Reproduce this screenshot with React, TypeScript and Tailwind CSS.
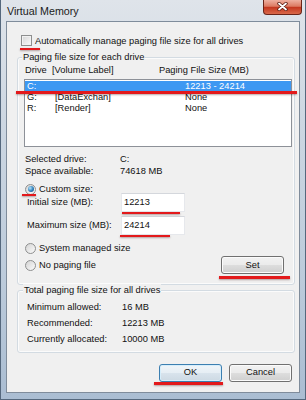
import React from "react";

function Checkbox() {
  return (
    <div className="w-[11px] h-[11px] shrink-0 border border-[#8e8f8f] bg-gradient-to-br from-[#d6d6d6] to-[#fbfbfb] shadow-[inset_0_0_0_1px_#f2f2f2]" />
  );
}

function Radio({ checked = false }: { checked?: boolean }) {
  return (
    <div className="w-[11px] h-[11px] shrink-0 rounded-full border border-[#8e8f8f] bg-gradient-to-br from-[#d4d4d4] to-[#fbfbfb] flex items-center justify-center">
      {checked && (
        <div className="w-[6px] h-[6px] rounded-full bg-[radial-gradient(circle_at_35%_35%,#b5e4fb,#2f7fbb_55%,#164a76)]" />
      )}
    </div>
  );
}

function Button({ label, primary = false }: { label: string; primary?: boolean }) {
  return (
    <div
      className={
        primary
          ? "w-[63px] h-[18px] rounded-[3px] border border-[#3c7fb1] shadow-[inset_0_0_0_1px_#d6eefb] bg-[linear-gradient(#f0f5f9,#e6eef4_48%,#d8e3ec_52%,#cdd9e3)] flex items-center justify-center"
          : "w-[63px] h-[18px] rounded-[3px] border border-[#707070] shadow-[inset_0_0_0_1px_#fbfbfb] bg-[linear-gradient(#f2f2f2,#ebebeb_48%,#dddddd_52%,#cfcfcf)] flex items-center justify-center"
      }
    >
      {label}
    </div>
  );
}

function Field({ label, value }: { label: string; value: string }) {
  return (
    <div className="flex items-center h-[19px] pl-[9px]">
      <span className="w-[94px]">{label}</span>
      <div className="w-[64px] h-[19px] bg-white border border-[#e6e8ec] border-t-[#d4d7dc] pl-[2px] flex items-center leading-[12px] pb-[1px]">
        {value}
      </div>
    </div>
  );
}

const drives = [
  { letter: "C:", label: "", size: "12213 - 24214", selected: true },
  { letter: "G:", label: "[DataExchan]", size: "None", selected: false },
  { letter: "R:", label: "[Render]", size: "None", selected: false },
];

export default function App() {
  return (
    <div className="relative w-[306px] h-[400px] overflow-hidden font-['Liberation_Sans',Arial,sans-serif] text-[9.3px] text-[#111]">
      <div className="flex flex-col w-full h-full border-x border-b border-[#55687d] bg-[linear-gradient(#dfe4ea,#cdd7e2_30%,#bccbdb_70%,#aabdd2)]">
        {/* title bar */}
        <div className="flex justify-between h-[21px] shrink-0">
          <span className="ml-[6px] mt-[5px] text-[10.7px] leading-[13px] text-[#1b1b1b]">Virtual Memory</span>
          <div className="mr-[3px] w-[39px] h-[15px] rounded-b-[4px] border border-t-0 border-[#6a2418] bg-[linear-gradient(#eeb0a0,#dc7a62_45%,#c4371f_52%,#d9694a)] flex items-center justify-center pb-[2px]">
            <svg width="11" height="9" viewBox="0 0 11 9">
              <path d="M2 1.5 L9 7.5 M9 1.5 L2 7.5" stroke="#5a1a10" strokeWidth="3.4" strokeLinecap="round" />
              <path d="M2 1.5 L9 7.5 M9 1.5 L2 7.5" stroke="#ffffff" strokeWidth="1.8" strokeLinecap="round" />
            </svg>
          </div>
        </div>

        {/* client area */}
        <div className="flex-1 mx-[5px] mb-[6px] flex flex-col border border-[#7f8c9b] bg-[#f0f0f0]">
          <div className="flex items-center mt-[13px] ml-[14px] h-[11px] gap-[3px] leading-[12px]">
            <Checkbox />
            <span>Automatically manage paging file size for all drives</span>
          </div>

          {/* paging file per drive */}
          <div className="relative mt-[11px] ml-[10px] mr-[4px] border border-[#d3dbe2] rounded-[3px] shadow-[inset_0_0_0_1px_#fbfbfb] pt-[6px] pb-[10px]">
            <span className="absolute -top-[7px] left-[4px] px-[1px] bg-[#f0f0f0] leading-[12px]">
              Paging file size for each drive
            </span>
            <div className="flex ml-[7px] leading-[12px]">
              <span className="w-[27px]">Drive</span>
              <span className="w-[107px]">[Volume Label]</span>
              <span>Paging File Size (MB)</span>
            </div>
            <div className="mt-[3px] ml-[6px] mr-[2px] h-[68px] bg-white border border-[#8d9198] pt-[1px]">
              {drives.map((d) => (
                <div
                  key={d.letter}
                  className={
                    d.selected
                      ? "flex items-center h-[11px] pl-[2px] bg-[#3d98f2] text-white leading-[11px]"
                      : "flex items-center h-[11px] pl-[2px] leading-[11px]"
                  }
                >
                  <span className="w-[28px]">{d.letter}</span>
                  <span className="w-[130px]">{d.label}</span>
                  <span>{d.size}</span>
                </div>
              ))}
            </div>

            <div className="mt-[6px] ml-[7px] leading-[12px]">
              <div className="flex h-[12px]">
                <span className="w-[95px]">Selected drive:</span>
                <span>C:</span>
              </div>
              <div className="flex h-[12px]">
                <span className="w-[95px]">Space available:</span>
                <span>74618 MB</span>
              </div>
            </div>

            <div className="flex items-center mt-[6px] ml-[7px] h-[12px] gap-[3px] leading-[12px]">
              <Radio checked />
              <span>Custom size:</span>
            </div>

            <div className="-mt-[2px]">
              <Field label="Initial size (MB):" value="12213" />
              <div className="mt-[4px]">
                <Field label="Maximum size (MB):" value="24214" />
              </div>
            </div>

            <div className="flex items-center mt-[7px] ml-[7px] h-[12px] gap-[3px] leading-[12px]">
              <Radio />
              <span>System managed size</span>
            </div>
            <div className="flex items-center justify-between mt-[2px] ml-[7px] mr-[10px] h-[18px] leading-[12px]">
              <div className="flex items-center gap-[3px]">
                <Radio />
                <span>No paging file</span>
              </div>
              <Button label="Set" />
            </div>
          </div>

          {/* totals */}
          <div className="relative mt-[5px] ml-[10px] mr-[4px] border border-[#d3dbe2] rounded-[3px] shadow-[inset_0_0_0_1px_#fbfbfb] pt-[8px] pb-[5px] pl-[9px] leading-[16px]">
            <span className="absolute -top-[7px] left-[5px] px-[1px] bg-[#f0f0f0] leading-[12px]">
              Total paging file size for all drives
            </span>
            <div className="flex">
              <span className="w-[95px]">Minimum allowed:</span>
              <span>16 MB</span>
            </div>
            <div className="flex">
              <span className="w-[95px]">Recommended:</span>
              <span>12213 MB</span>
            </div>
            <div className="flex">
              <span className="w-[95px]">Currently allocated:</span>
              <span>10000 MB</span>
            </div>
          </div>

          <div className="flex justify-end gap-[7px] mt-[11px] mr-[7px]">
            <Button label="OK" primary />
            <Button label="Cancel" />
          </div>
        </div>
      </div>

      {/* red annotation strokes */}
      <div className="absolute left-[20px] top-[48px] w-[20px] h-[2px] bg-[#e3191b] shadow-[0_1px_2px_rgba(60,0,0,0.35)]" />
      <div className="absolute left-[16px] top-[91px] w-[281px] h-[3px] bg-[#e3191b] shadow-[0_1px_2px_rgba(60,0,0,0.35)]" />
      <div className="absolute left-[22px] top-[194px] w-[14px] h-[2px] bg-[#e3191b] shadow-[0_1px_2px_rgba(60,0,0,0.35)]" />
      <div className="absolute left-[122px] top-[212px] w-[58px] h-[2px] bg-[#e3191b] shadow-[0_1px_2px_rgba(60,0,0,0.35)]" />
      <div className="absolute left-[120px] top-[235px] w-[50px] h-[2px] bg-[#e3191b] shadow-[0_1px_2px_rgba(60,0,0,0.35)]" />
      <div className="absolute left-[219px] top-[276px] w-[71px] h-[3px] bg-[#e3191b] shadow-[0_1px_2px_rgba(60,0,0,0.35)]" />
      <div className="absolute left-[154px] top-[382px] w-[69px] h-[3px] bg-[#e3191b] shadow-[0_1px_2px_rgba(60,0,0,0.35)]" />
    </div>
  );
}
